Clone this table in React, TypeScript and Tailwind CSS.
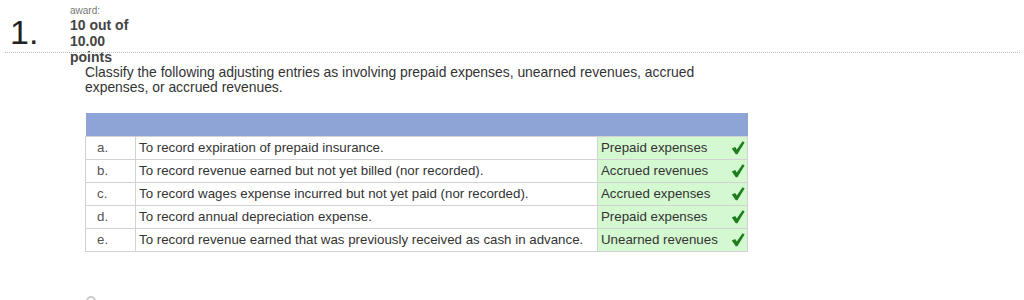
import React from "react";

const rows = [
  { k: "a.", text: "To record expiration of prepaid insurance.", ans: "Prepaid expenses" },
  { k: "b.", text: "To record revenue earned but not yet billed (nor recorded).", ans: "Accrued revenues" },
  { k: "c.", text: "To record wages expense incurred but not yet paid (nor recorded).", ans: "Accrued expenses" },
  { k: "d.", text: "To record annual depreciation expense.", ans: "Prepaid expenses" },
  { k: "e.", text: "To record revenue earned that was previously received as cash in advance.", ans: "Unearned revenues" },
];

function Check() {
  return (
    <svg width="14" height="15" viewBox="0 0 14 15">
      <path d="M0.8 8.6 L4.2 7 L5.8 9.6 L11.6 1.2 L13.6 2.4 L6.4 14.2 L4.8 14.2 Z" fill="#1e7d1e" />
    </svg>
  );
}

export default function App() {
  return (
    <div className="relative h-[300px] w-[1024px] overflow-hidden bg-white text-[#333]" style={{ fontFamily: "Arial, 'Liberation Sans', sans-serif" }}>
      <div className="flex pl-[10px] pt-[4px]">
        <div className="mt-[11px] w-[60px] text-[34px] leading-[34px] text-[#222]">1.</div>
        <div className="flex flex-col">
          <div className="text-[10px] leading-[13px] text-[#777]">award:</div>
          <div className="text-[14px] font-bold leading-[16px] text-[#444]">10 out of</div>
          <div className="text-[14px] font-bold leading-[16px] text-[#444]">10.00</div>
          <div className="text-[14px] font-bold leading-[16px] text-[#444]">points</div>
        </div>
      </div>
      <div className="absolute left-[5px] right-[4px] top-[52px] border-t border-dotted border-[#bbb]" />
      <div className="ml-[85px] w-[640px] text-[13.9px] leading-[15px] text-[#333]">
        Classify the following adjusting entries as involving prepaid expenses, unearned revenues, accrued expenses, or accrued revenues.
      </div>
      <table className="ml-[85px] mt-[18px] w-[663px] border-collapse text-[13.3px] text-[#333]">
        <thead>
          <tr>
            <th colSpan={3} className="h-[23px] bg-[#8ea4d6]" />
          </tr>
        </thead>
        <tbody>
          {rows.map((r) => (
            <tr key={r.k} className="h-[23px]">
              <td className="w-[50px] border border-[#d2d2d2] pl-[11px] text-[#555]">{r.k}</td>
              <td className="w-[462px] border border-[#d2d2d2] pl-[3px]">{r.text}</td>
              <td className="border border-[#d2d2d2] bg-[#d4f8d0] pl-[3px]">
                <div className="flex items-center justify-between pr-[2px]">
                  <span>{r.ans}</span>
                  <Check />
                </div>
              </td>
            </tr>
          ))}
        </tbody>
      </table>
      <div className="absolute left-[86px] top-[296px] h-[10px] w-[10px] rounded-full border-2 border-[#ccc]" />
    </div>
  );
}
